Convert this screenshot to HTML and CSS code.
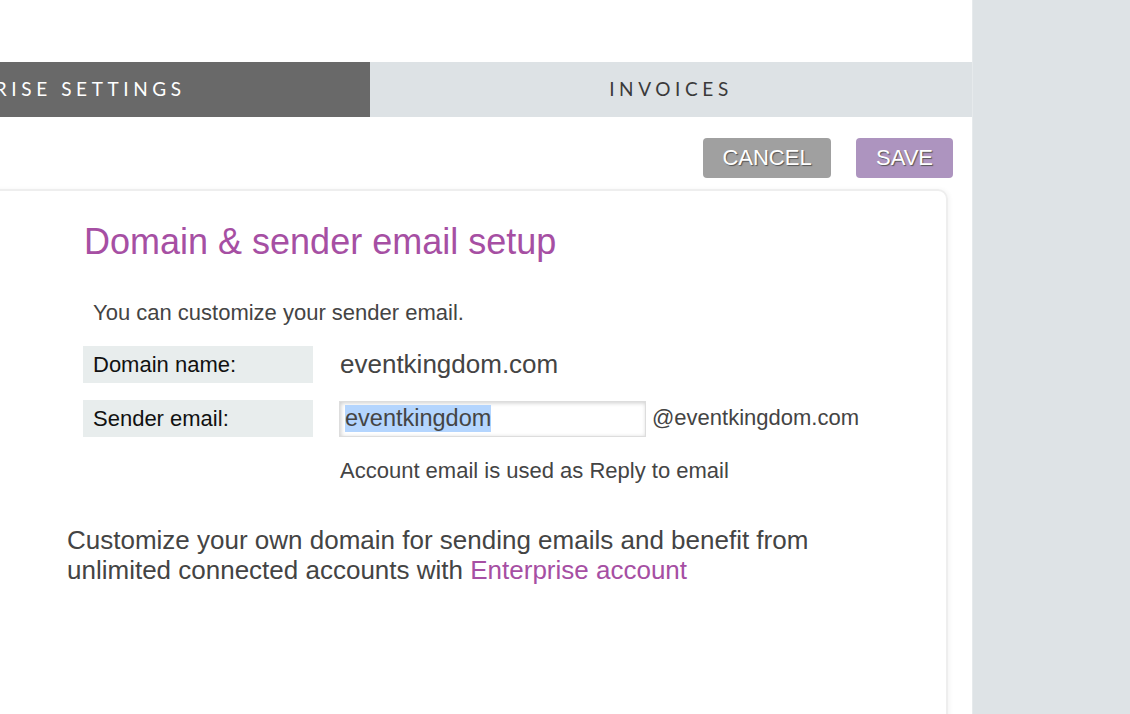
FILE: index.html
```html
<!DOCTYPE html>
<html lang="en">
<head>
  <meta charset="UTF-8">
  <title>Enterprise settings</title>
  <link rel="stylesheet" href="styles.css">
</head>
<body>
  <div class="layout">
    <div class="main">
      <div class="tabs">
        <div class="tab active">ENTERPRISE SETTINGS</div>
        <div class="tab">INVOICES</div>
      </div>

      <div class="actions">
        <button class="btn btn-cancel">CANCEL</button>
        <button class="btn btn-save">SAVE</button>
      </div>

      <div class="card">
        <h1>Domain &amp; sender email setup</h1>
        <p class="intro">You can customize your sender email.</p>

        <div class="row">
          <div class="label">Domain name:</div>
          <div class="value">eventkingdom.com</div>
        </div>
        <div class="row">
          <div class="label">Sender email:</div>
          <div class="field"><span class="selected">eventkingdom</span></div>
          <div class="suffix">@eventkingdom.com</div>
        </div>
        <p class="hint">Account email is used as Reply to email</p>

        <p class="promo">Customize your own domain for sending emails and benefit from<br>unlimited connected accounts with <a href="#">Enterprise account</a></p>
      </div>
    </div>
    <div class="sidebar"></div>
  </div>
</body>
</html>
```

FILE: styles.css
```css
body {
  margin: 0;
  font-family: 'Liberation Sans', Arial, sans-serif;
  color: #444;
  background: #fff;
  overflow: hidden;
}

.layout {
  display: flex;
  height: 714px;
}

.main {
  width: 972px;
  overflow: hidden;
  padding-top: 62px;
}

.sidebar {
  flex: 1;
  background-color: #dee3e6;
  border-left: 1px solid #e6eaec;
}

/* tabs */
.tabs {
  display: flex;
  height: 55px;
  margin-left: -288px;
}

.tab {
  flex: 1;
  display: flex;
  align-items: center;
  justify-content: center;
  padding-bottom: 3px;
  font-family: 'Lato', sans-serif;
  font-size: 19px;
  letter-spacing: 4.6px;
  color: #3a3a3a;
  background-color: #dde2e5;
}

.tab.active {
  flex: 0 0 658px;
  background-color: #696969;
  color: #fff;
}

/* buttons */
.actions {
  display: flex;
  justify-content: flex-end;
  gap: 25px;
  padding: 21px 19px 0 0;
}

.btn {
  height: 40px;
  border: none;
  border-radius: 4px;
  color: #fff;
  font-family: 'Liberation Sans', Arial, sans-serif;
  font-size: 22px;
  text-shadow: 1px 1px 1px #555;
  cursor: pointer;
}

.btn-cancel {
  width: 128px;
  background-color: #a0a0a0;
}

.btn-save {
  width: 97px;
  background-color: #ad94bf;
}

/* card */
.card {
  margin: 11px 24px 0 -30px;
  height: 560px;
  border: 2px solid #eeeeee;
  border-radius: 10px;
  box-shadow: 2px 0 4px rgba(0, 0, 0, 0.04);
  padding: 0 0 0 95px;
}

.card h1 {
  margin: 31px 0 0 17px;
  font-size: 36px;
  line-height: 40px;
  font-weight: normal;
  color: #a64fa3;
}

.intro {
  margin: 38px 0 20px 26px;
  font-size: 22px;
  line-height: 26px;
}

.row {
  display: flex;
  align-items: center;
  margin: 0 0 17px 16px;
}

.label {
  width: 220px;
  height: 37px;
  padding-left: 10px;
  display: flex;
  align-items: center;
  background-color: #e8eded;
  color: #111;
  font-size: 22px;
}

.value {
  margin-left: 27px;
  font-size: 26px;
}

.field {
  margin-left: 26px;
  width: 300px;
  height: 34px;
  padding-left: 5px;
  display: flex;
  align-items: center;
  border: 1px solid #ddd;
  box-shadow: inset 1px 1px 4px rgba(0, 0, 0, 0.2);
  font-size: 23.5px;
}

.selected {
  background-color: #b4d5fe;
}

.suffix {
  margin-left: 6px;
  margin-top: -2px;
  font-size: 22px;
}

.hint {
  margin: 21px 0 0 273px;
  font-size: 22px;
  line-height: 26px;
}

.promo {
  margin: 41px 0 0 0;
  font-size: 26px;
  line-height: 30px;
}

.promo a {
  color: #a64fa3;
  text-decoration: none;
}
```
